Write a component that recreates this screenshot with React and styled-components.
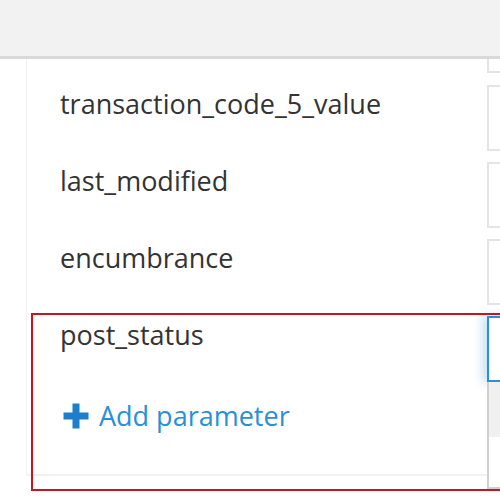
import React from "react";
import styled, { createGlobalStyle } from "styled-components";

const Global = createGlobalStyle`
  html, body { margin: 0; padding: 0; background: #fff; }
  body { font-family: "Open Sans", "Noto Sans", sans-serif; }
`;

const Page = styled.div`
  width: 500px;
  height: 500px;
  overflow: hidden;
  position: relative;
  display: flex;
  flex-direction: column;
`;

const Header = styled.div`
  height: 56px;
  flex: none;
  background: #f2f2f2;
  border-bottom: 3px solid #d9d9d9;
  position: relative;
  z-index: 2;
`;

const Viewport = styled.div`
  flex: 1;
  overflow: hidden;
  position: relative;
`;

const Panel = styled.div`
  margin-left: 26px;
  margin-top: -52px;
  border-left: 1px solid #f1f1f1;
  border-bottom: 2px solid #f1f1f1;
  width: 700px;
`;

const Row = styled.div`
  display: flex;
  align-items: flex-start;
  height: 77px;
  &:first-child { height: 78px; }
`;

const Label = styled.div`
  flex: none;
  width: 460px;
  padding-left: 33px;
  padding-top: 4px;
  box-sizing: border-box;
  font-size: 27px;
  line-height: 30px;
  color: #333;
`;

const Input = styled.div`
  flex: none;
  width: 200px;
  height: 66px;
  box-sizing: border-box;
  border: 2px solid ${(p) => (p.$focused ? "#2a8fdc" : "#e4e4e4")};
  background: #fff;
  box-shadow: ${(p) => (p.$focused ? "-4px 0 10px rgba(42,143,220,0.3)" : "none")};
  position: relative;
`;

const Dropdown = styled.div`
  position: absolute;
  left: -2px;
  top: 64px;
  width: 200px;
  height: 107px;
  box-sizing: border-box;
  border: 2px solid #d0d0d0;
  border-top: none;
  background: #fff;
  z-index: 3;
`;

const Option = styled.div`
  height: ${(p) => p.$h}px;
  background: ${(p) => (p.$active ? "#f0f0f0" : "#fff")};
`;

const AddRow = styled.div`
  display: flex;
  align-items: center;
  gap: 10px;
  height: 81px;
  padding-left: 36px;
  padding-bottom: 36px;
  box-sizing: border-box;
  font-size: 27px;
  line-height: 30px;
  color: #2b8fd6;
`;

const PlusIcon = styled.svg`
  width: 26px;
  height: 26px;
  flex: none;
`;

const Highlight = styled.div`
  position: absolute;
  left: 31px;
  top: 313px;
  width: 520px;
  height: 178px;
  box-sizing: border-box;
  border: 2px solid #c4161c;
  pointer-events: none;
  z-index: 4;
`;

const params = ["", "transaction_code_5_value", "last_modified", "encumbrance"];

export default function App() {
  return (
    <>
      <Global />
      <Page>
        <Header />
        <Viewport>
          <Panel>
            {params.map((p, i) => (
              <Row key={i}>
                <Label>{p}</Label>
                <Input />
              </Row>
            ))}
            <Row>
              <Label>post_status</Label>
              <Input $focused>
                <Dropdown>
                  <Option $active $h={55} />
                  <Option $h={50} />
                </Dropdown>
              </Input>
            </Row>
            <AddRow>
              <PlusIcon viewBox="0 0 26 26">
                <path d="M9.5 0.5h7v9H25.5v7h-9v9h-7v-9H0.5v-7h9z" fill="#1b7fcd" />
              </PlusIcon>
              Add parameter
            </AddRow>
          </Panel>
        </Viewport>
        <Highlight />
      </Page>
    </>
  );
}
